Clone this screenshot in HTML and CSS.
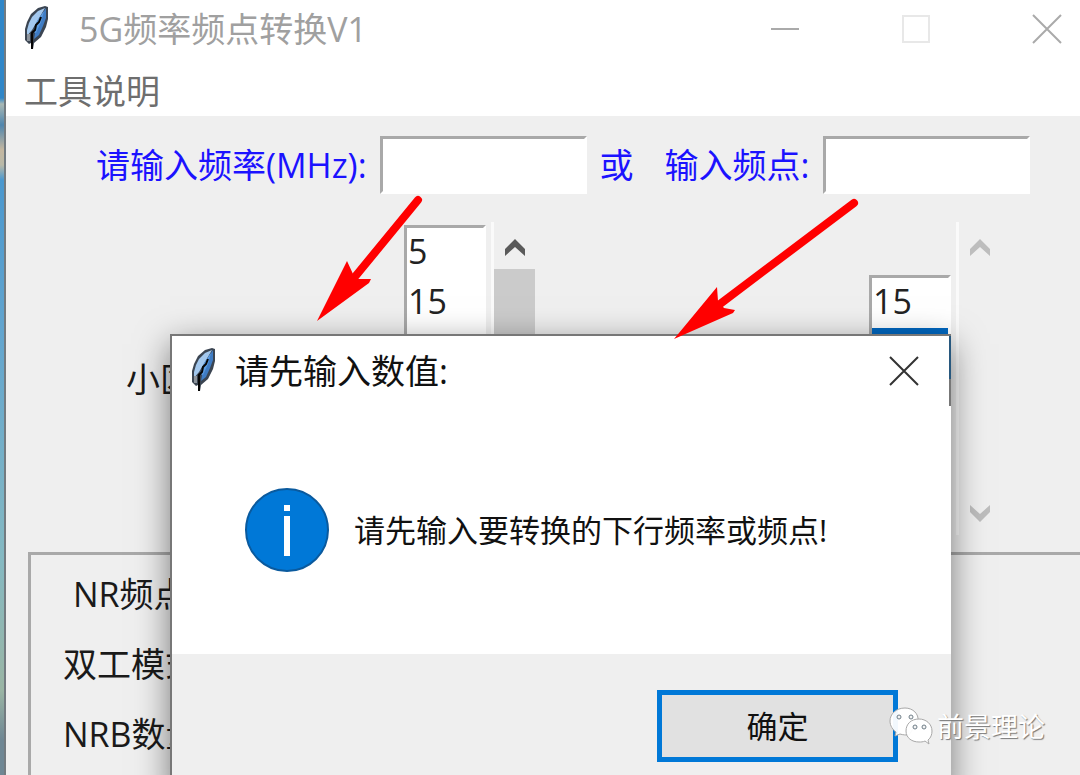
FILE: index.html
```html
<!DOCTYPE html>
<html lang="zh-CN">
<head>
<meta charset="utf-8">
<title>5G频率频点转换V1</title>
<link rel="stylesheet" href="styles.css">
</head>
<body>
<svg class="defs" width="0" height="0" aria-hidden="true">
  <symbol id="feather" viewBox="0 0 27 45">
    <path d="M21 1 L14 3 L7 9 L3 17 L1 24 L1 35 L5 39 L7 38 L7 44 L9 44 L10 38 L17 32 L22 22 L24 14 L24 2 Z" fill="#3b4552"/>
    <path d="M21 3 L14 6 L8 12 L5 18 L3 25 L3 31 L8 25 L14 15 Z" fill="#a3c8ee"/>
    <path d="M22 3 L16 12 L12 22 L10 34 L15 30 L19 21 L22 13 Z" fill="#3f7cc4"/>
    <path d="M20 6 L13 16 L9 27 L12 28 L17 17 Z" fill="#5c9be0"/>
    <path d="M17 12 L15 17 L12 20 L11 25 L8 28 L8 44" fill="none" stroke="#050505" stroke-width="2"/>
    <path d="M3 29 L3 36 L6 36 L6 29 Z" fill="#8d949c"/>
  </symbol>
  <symbol id="cross" viewBox="0 0 30 30">
    <path d="M1 1 L29 29 M29 1 L1 29" fill="none" stroke="currentColor" stroke-width="2"/>
  </symbol>
  <symbol id="chevron" viewBox="0 0 20 18">
    <path d="M0 10 L10 0 L20 10 L20 17 L10 8 L0 17 Z" fill="currentColor"/>
  </symbol>
</svg>

<div class="desktop">
  <main class="window">
    <header class="titlebar">
      <svg class="feather"><use href="#feather"/></svg>
      <h1 class="title">5G频率频点转换V1</h1>
      <div class="controls">
        <button class="control" aria-label="最小化"><svg class="glyph" viewBox="0 0 30 30"><path d="M1 15H29" stroke="#aaa" stroke-width="2"/></svg></button>
        <button class="control" aria-label="最大化"><svg class="glyph" viewBox="0 0 30 30"><path d="M2 2H28V28H2Z" fill="none" stroke="#e8e8e8" stroke-width="2"/></svg></button>
        <button class="control" aria-label="关闭"><svg class="glyph"><use href="#cross"/></svg></button>
      </div>
    </header>
    <nav class="menubar"><button class="menu">工具说明</button></nav>

    <form class="form">
      <div class="inputs">
        <label for="freq">请输入频率(MHz):</label>
        <input id="freq" class="entry" type="text">
        <span class="or">或</span>
        <label for="point">输入频点:</label>
        <input id="point" class="entry" type="text">
      </div>
      <div class="lists">
        <label class="band" for="bandwidth">小区</label>
        <select id="bandwidth" class="listbox tall" size="6">
          <option>5</option><option>15</option>
        </select>
        <div class="scroll active">
          <svg class="chevron"><use href="#chevron"/></svg>
          <div class="thumb"></div>
          <svg class="chevron down"><use href="#chevron"/></svg>
        </div>
        <select class="listbox short" size="4" aria-label="子载波间隔">
          <option>15</option><option selected>30</option>
        </select>
        <div class="scroll">
          <svg class="chevron"><use href="#chevron"/></svg>
          <svg class="chevron down"><use href="#chevron"/></svg>
        </div>
      </div>
    </form>

    <section class="results">
      <p class="result indent">NR频点</p>
      <p class="result">双工模式</p>
      <p class="result">NRB数量</p>
    </section>
  </main>

  <div class="dialog" role="dialog" aria-labelledby="dialog-title">
    <header class="dialog-head">
      <svg class="feather"><use href="#feather"/></svg>
      <h2 class="dialog-title" id="dialog-title">请先输入数值:</h2>
      <button class="dialog-close" aria-label="关闭"><svg class="glyph"><use href="#cross"/></svg></button>
    </header>
    <div class="dialog-body">
      <svg class="info" viewBox="0 0 84 84">
        <circle cx="42" cy="42" r="41" fill="#0078d7" stroke="#0a5a9e" stroke-width="2"/>
        <path d="M39 17H45V23H39Z M39 28H45V68H39Z" fill="#fff"/>
      </svg>
      <p class="message">请先输入要转换的下行频率或频点!</p>
    </div>
    <footer class="dialog-foot"><button class="ok">确定</button></footer>
  </div>

  <svg class="arrows" width="1080" height="400" viewBox="0 0 1080 400" aria-hidden="true">
    <g fill="#f00">
      <path d="M418 200 L354 278" stroke="#f00" stroke-width="8" stroke-linecap="round"/>
      <path d="M317 321 L347 261 L353 274 L358 279 L371 279 L369 283 Z"/>
      <path d="M854 203 L720 304" stroke="#f00" stroke-width="8" stroke-linecap="round"/>
      <path d="M674 339 L717 287 L718 301 L724 308 L735 310 L733 313 Z"/>
    </g>
  </svg>

  <div class="watermark">
    <svg class="wechat" viewBox="0 0 44 38">
      <g fill="#fff" fill-opacity=".95" stroke="#a8a8a8">
        <path d="M16 1 C7 1 1 7 1 14 C1 19 4 23 7 25 L6 29 L11 27 C14 28 17 28 20 28 L29 14 C30 7 24 1 16 1 Z"/>
        <path d="M30 12 C22 12 17 17 17 24 C17 31 23 35 30 35 C32 35 34 35 36 34 L40 37 L39 33 C42 31 43 27 43 24 C43 17 37 12 30 12 Z"/>
      </g>
      <g fill="#f4f4f4" stroke="#6f7e88" stroke-width="1">
        <circle cx="10" cy="10" r="2"/><circle cx="22" cy="10" r="2"/>
        <circle cx="26" cy="20" r="2"/><circle cx="35" cy="20" r="2"/>
      </g>
    </svg>
    <span>前景理论</span>
  </div>
</div>
</body>
</html>
```
FILE: styles.css
```css
* { box-sizing: border-box; }

body {
  margin: 0;
  overflow: hidden;
  font: 34px/50px "Open Sans", "Noto Sans CJK SC", sans-serif;
  color: #1a1a1a;
}

h1, h2, p { margin: 0; font-weight: 400; font-size: inherit; }

button {
  padding: 0;
  border: 0;
  background: none;
  font: inherit;
  color: inherit;
}

svg { display: block; }

.defs { position: absolute; }

.desktop {
  position: relative;
  height: 100vh;
  overflow: hidden;
  padding-left: 4px;
  background: linear-gradient(#2f86c8 0 98px, #a9b8b4 104px, #4f86ae 125px, #c4b7a0 150px, #b9b9a8 165px, #4a98cf 180px, #62a5cf 330px, #85b9c2 560px, #9ab5a4 690px, #6f8794 740px);
}

.window {
  display: flex;
  flex-direction: column;
  min-height: 100%;
  border-left: 2px solid #737b80;
  background: #efefef;
}

.titlebar {
  display: flex;
  align-items: center;
  height: 58px;
  padding: 0 18px;
  background: #fff;
  color: #a0a0a0;
}

.feather { width: 27px; height: 45px; margin-bottom: 4px; }

.title { margin-left: 28px; }

.controls { display: flex; gap: 36px; margin-left: auto; margin-right: -32px; }

.control { display: grid; place-items: center; width: 95px; height: 58px; color: #aaa; }

.glyph { width: 30px; height: 30px; }

.menubar {
  height: 58px;
  padding: 8px 18px;
  background: #fff;
  color: #6e6e6e;
}
.menu { display: block; line-height: 50px; }

.inputs {
  display: flex;
  align-items: center;
  gap: 13px;
  padding: 20px 50px 0 90px;
  color: #1b12ff;
}

.entry {
  width: 207px;
  height: 58px;
  padding: 0 8px;
  border: 3px solid #fff;
  border-top-color: #a9a9a9;
  border-left-color: #a9a9a9;
  background: #fff;
  font: inherit;
}

.or { margin-right: 18px; }

.lists {
  display: flex;
  align-items: center;
  height: 313px;
  margin-top: 28px;
  padding: 0 80px 0 120px;
}

.band { flex: 0 0 278px; }

.listbox {
  width: 82px;
  padding: 0;
  border: 3px solid #fff;
  border-top-color: #a9a9a9;
  border-left-color: #a9a9a9;
  border-radius: 0;
  background: #fff;
  font: 34px/48px "Open Sans", sans-serif;
  color: #222;
  overflow: hidden;
  scrollbar-width: none;
}
.listbox option { height: 50px; min-height: 50px; padding: 0 1px; line-height: 48px; }
.listbox option:checked { background: linear-gradient(#0067c0, #0067c0); }
.tall { height: 308px; }
.short { height: 208px; margin-left: auto; }

.scroll {
  display: flex;
  flex-direction: column;
  align-items: center;
  align-self: stretch;
  width: 44px;
  margin-left: 5px;
  padding: 17px 0 13px;
  border-left: 3px solid #fafafa;
  color: #bdbdbd;
}
.chevron { width: 20px; height: 18px; }
.down { margin-top: auto; transform: rotate(180deg); }
.active .chevron { color: #5a5a5a; }
.thumb { width: 41px; height: 150px; margin-top: 12px; background: #cbcbcb; }

.results {
  flex: 1;
  margin: 17px -4px -4px 22px;
  padding: 14px 32px;
  border: 3px solid #a9a9a9;
}
.result { margin-bottom: 20px; }
.indent { padding-left: 10px; }

.dialog {
  position: absolute;
  top: 334px;
  right: 129px;
  bottom: -20px;
  left: 170px;
  display: flex;
  flex-direction: column;
  border: 2px solid #777;
  border-right: 0;
  background: #fff;
  box-shadow: 0 10px 32px rgba(0, 0, 0, .5);
  color: #111;
}
.dialog::after {
  content: "";
  position: absolute;
  top: 0;
  right: 0;
  width: 2px;
  height: 70px;
  background: linear-gradient(#28587e 0 43px, #777 43px);
}

.dialog-head { display: flex; align-items: center; height: 70px; padding: 0 32px 0 19px; }
.dialog-title { margin-left: 17px; }
.dialog-close { margin-left: auto; color: #333; }

.dialog-body {
  display: flex;
  align-items: center;
  gap: 25px;
  height: 248px;
  padding: 0 73px;
}
.info { flex: none; width: 84px; height: 84px; }
.message { font-size: 31px; white-space: nowrap; }

.dialog-foot {
  flex: 1;
  display: flex;
  justify-content: flex-end;
  align-items: flex-start;
  padding: 36px 53px 0;
  background: #efefef;
}
.ok {
  width: 241px;
  height: 72px;
  border: 5px solid #0078d7;
  background: #e1e1e1;
  font-size: 31px;
}

.arrows { position: absolute; top: 0; left: 0; }

.watermark {
  position: absolute;
  right: 35px;
  bottom: 29px;
  display: flex;
  align-items: center;
  gap: 4px;
  font: 27px/40px "Noto Sans CJK SC", sans-serif;
  color: #fff;
  text-shadow: 1px 1px 1px #777;
}
.wechat { width: 44px; height: 38px; }
```
